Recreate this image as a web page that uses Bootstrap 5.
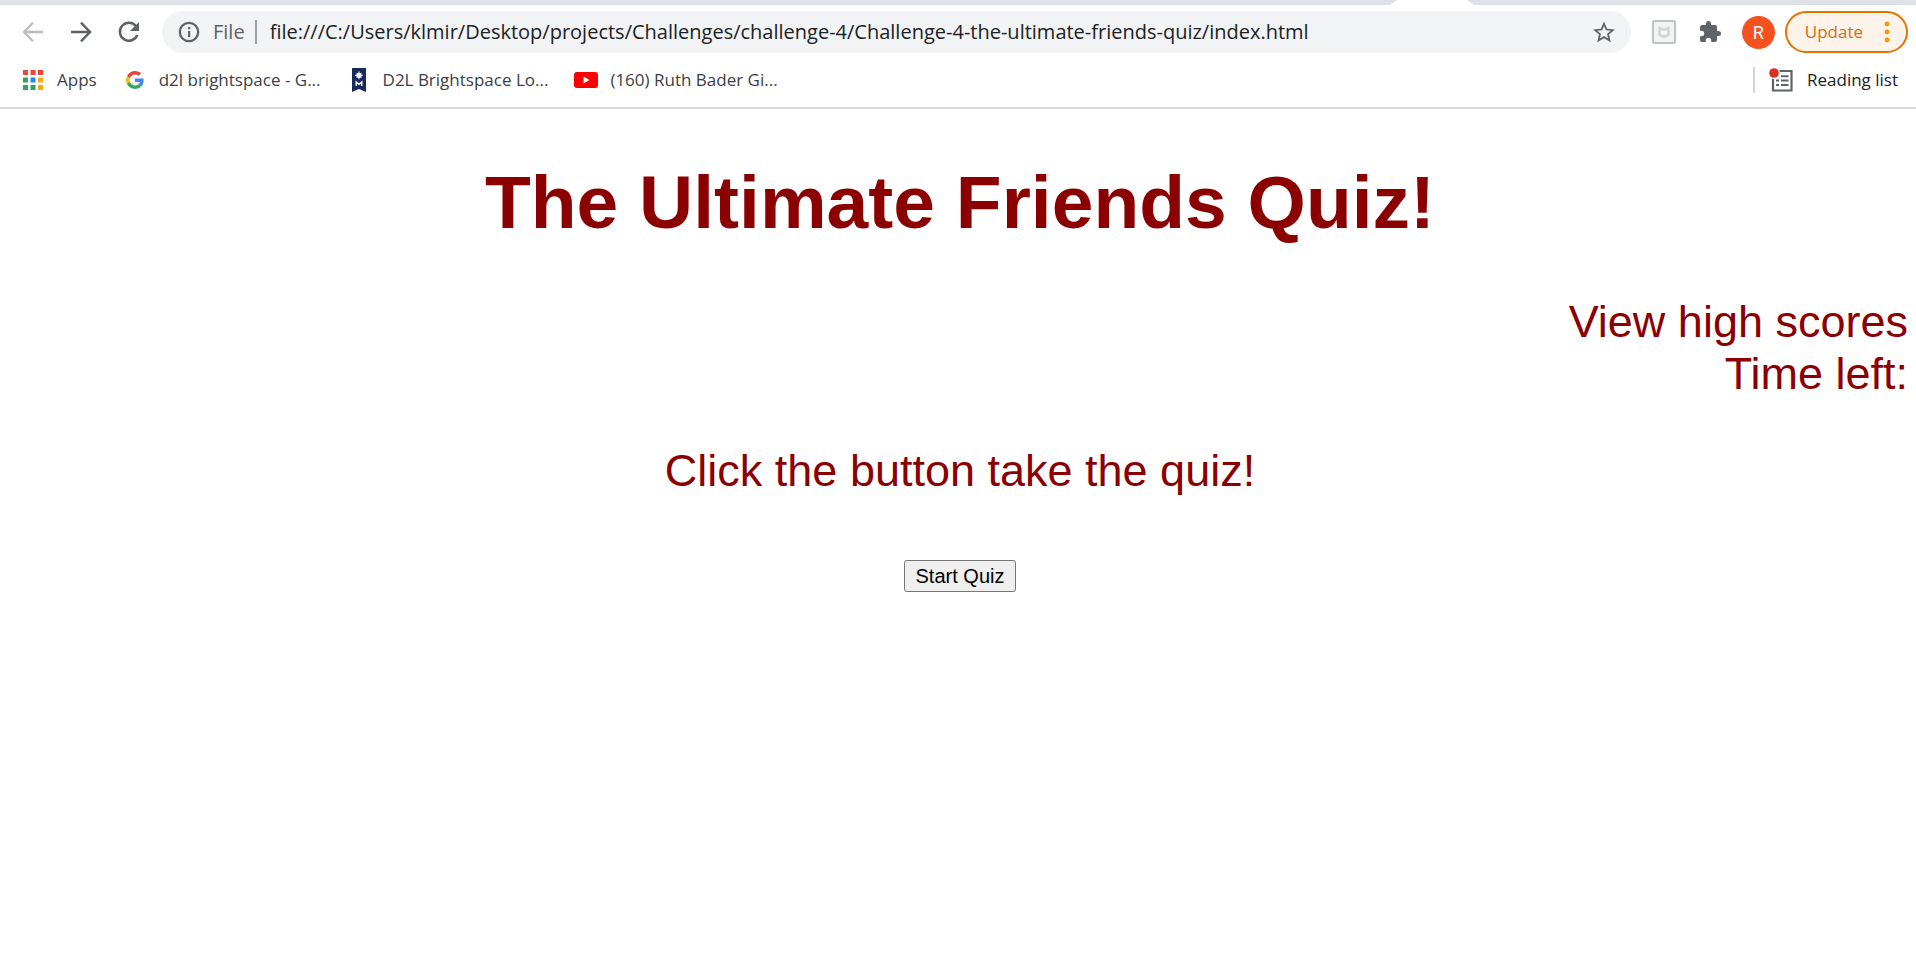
<!DOCTYPE html>
<html lang="en">
<head>
<meta charset="utf-8">
<meta name="viewport" content="width=device-width, initial-scale=1">
<title>The Ultimate Friends Quiz</title>
<link href="https://cdn.jsdelivr.net/npm/bootstrap@5.3.0/dist/css/bootstrap.min.css" rel="stylesheet">
<style>
  body { font-family: "Liberation Sans", Arial, sans-serif; background: #fff; }
  svg { display: block; flex: none; }

  /* browser chrome */
  .chrome { font-family: "Open Sans", "Noto Sans", sans-serif; border-bottom: 2px solid #dadada; color: #3c4043; }
  .tab-strip { height: 5px; background: #dee1e6; }
  .tab-gap { width: 526px; }
  .tab-gap::before { content: ""; display: block; height: 5px; width: 84px; background: #fff; clip-path: polygon(7px 0, 77px 0, 84px 5px, 0 5px); }
  .toolbar { padding: 6px 8px 6px 16px; }
  .icon-button { border: 0; background: none; padding: 0; color: #5f6368; flex: none; }
  .history { gap: 14px; }
  .nav-button { width: 34px; height: 34px; display: grid; place-items: center; }
  .address { height: 42px; border-radius: 21px; background: #f1f3f4; padding: 0 16px; margin: 0 21px 0 16px; }
  .scheme { font-size: 20px; color: #5f6368; margin: 0 10px 0 13px; }
  .rule { width: 2px; height: 24px; background: #9aa0a6; flex: none; margin-right: 13px; }
  .address input { font-size: 20px; border: 0; background: none; padding: 0; outline: 0; color: #202124; min-width: 0; }
  .webadvisor { margin-right: 22px; }
  .extensions { margin-right: 20px; }
  .avatar { width: 33px; height: 33px; border-radius: 50%; background: #f4511e; color: #fff; font: 18px/33px Roboto, sans-serif; margin-right: 10px; }
  .update { height: 42px; border: 2px solid #e37400; border-radius: 21px; background: #fcf3ea; color: #d56e0c; font-size: 17px; padding: 0 16px 0 18px; gap: 21px; }
  .bookmarks { height: 48px; padding: 0 18px 6px 21px; font-size: 17px; }
  .bookmarks a { color: #3c4043; text-decoration: none; white-space: nowrap; display: flex; align-items: center; gap: 12px; }
  .bookmark-list { gap: 26px; }
  .favicon { width: 24px; display: grid; place-items: center; }
  .bookmarks .reading { color: #202124; border-left: 2px solid #d3d5d8; padding-left: 14px; gap: 14px; }

  /* quiz page */
  .quiz { color: #8b0000; font-size: 45px; line-height: 52px; padding: 50px 8px 50px 12px; }
  .quiz h1 { font-size: 75px; line-height: 86px; font-weight: 700; margin: 0 0 51px; }
  .quiz a { color: inherit; text-decoration: none; }
  .prompt { margin: 45px 0 63px; }
  .start { font-size: 20px; line-height: 24px; padding: 2px 11px; color: #000; background: #efefef; border: 1px solid #767676; border-radius: 3px; height: 32px; }
</style>
</head>
<body>
<header class="chrome">
  <div class="tab-strip d-flex justify-content-end"><div class="tab-gap"></div></div>

  <div class="toolbar d-flex align-items-center">
    <nav class="history d-flex" aria-label="History">
      <button class="icon-button nav-button" aria-label="Back" disabled><svg width="22" height="22" viewBox="0 0 22 22" fill="none" stroke="#babcbe" stroke-width="2.3"><path d="M21 11H2.500M11 1.700L2 11l9 9.300"/></svg></button>
      <button class="icon-button nav-button" aria-label="Forward"><svg width="22" height="22" viewBox="0 0 22 22" fill="none" stroke="#5f6368" stroke-width="2.500"><path d="M1 11h18.500M11 1.700L20 11l-9 9.300"/></svg></button>
      <button class="icon-button nav-button" aria-label="Reload"><svg width="22" height="22" viewBox="0 0 22 22"><path d="M18 5.200A9 9 0 1 0 19.300 14" fill="none" stroke="#5f6368" stroke-width="2.500"/><path d="M21 1v9h-9z" fill="#5f6368"/></svg></button>
    </nav>

    <div class="address d-flex align-items-center flex-grow-1">
      <svg width="22" height="22" viewBox="0 0 22 22"><circle cx="11" cy="11" r="9.200" fill="none" stroke="#5f6368" stroke-width="2.300"/><path d="M10 6h2.200v2.200H10zM10 10h2.200v6H10z" fill="#5f6368"/></svg>
      <label class="scheme" for="url">File</label>
      <span class="rule"></span>
      <input id="url" class="flex-grow-1" type="text" value="file:///C:/Users/klmir/Desktop/projects/Challenges/challenge-4/Challenge-4-the-ultimate-friends-quiz/index.html">
      <button class="icon-button" aria-label="Bookmark this page"><svg width="22" height="22" viewBox="0 0 22 22"><path fill="#5f6368" fill-rule="evenodd" d="M22 8.400l-7.900-.7L11 .400 7.900 7.700 0 8.400l6 5.200L4.200 21.300 11 17.200l6.800 4.100L16 13.600zM11 15.100l-4.100 2.500L8 12.900 4.400 9.700l4.800-.4L11 4.900l1.900 4.400 4.800.4-3.700 3.200 1.100 4.700z"/></svg></button>
    </div>

    <div class="d-flex align-items-center">
      <button class="icon-button webadvisor" aria-label="WebAdvisor"><svg width="24" height="24" viewBox="0 0 24 24"><rect x="1" y="1" width="22" height="22" rx="1" fill="#f1f3f4" stroke="#bdc3c8" stroke-width="2"/><path d="M7.500 8L12 10l4.500-2v7L12 17l-4.500-2z" fill="none" stroke="#d2d6d9" stroke-width="2.500"/></svg></button>
      <button class="icon-button extensions" aria-label="Extensions"><svg width="24" height="24" viewBox="0 0 24 24" fill="#5f6368"><path d="M20.500 11H19V7a2 2 0 0 0-2-2h-4V3.500a2.500 2.500 0 0 0-5 0V5H4a2 2 0 0 0-2 2v3.800h1.500a2.700 2.700 0 0 1 0 5.400H2V20a2 2 0 0 0 2 2h3.800v-1.500a2.700 2.700 0 0 1 5.400 0V22H17a2 2 0 0 0 2-2v-4h1.500a2.500 2.500 0 0 0 0-5z"/></svg></button>
      <button class="icon-button avatar" aria-label="Profile">R</button>
      <button class="update d-flex align-items-center">Update <svg width="6" height="22" viewBox="0 0 6 22" fill="#f29900"><circle cx="3" cy="3" r="2.400"/><circle cx="3" cy="11" r="2.400"/><circle cx="3" cy="19" r="2.400"/></svg></button>
    </div>
  </div>

  <nav class="bookmarks d-flex align-items-center" aria-label="Bookmarks">
    <div class="bookmark-list d-flex align-items-center flex-grow-1">
      <a href="#"><span class="favicon"><svg width="20" height="20" viewBox="0 0 20 20"><path d="M0 0h5v5H0zM7.500 0h5v5h-5zM15 0h5v5h-5z" fill="#f44336"/><path d="M0 7.500h5v5H0zM0 15h5v5H0zM7.500 15h5v5h-5z" fill="#34a35c"/><path d="M7.500 7.500h5v5h-5z" fill="#1e88f5"/><path d="M15 7.500h5v5h-5zM15 15h5v5h-5z" fill="#f9ab00"/></svg></span>Apps</a>
      <a href="#"><span class="favicon"><svg width="18" height="18" viewBox="0 0 48 48"><path fill="#ea4335" d="M24 9.500c3.540 0 6.710 1.220 9.210 3.600l6.850-6.850C35.900 2.380 30.470 0 24 0 14.620 0 6.510 5.380 2.560 13.220l7.980 6.190C12.430 13.720 17.740 9.500 24 9.500z"/><path fill="#4285f4" d="M46.980 24.550c0-1.570-.15-3.090-.38-4.550H24v9.020h12.940c-.58 2.960-2.260 5.480-4.780 7.180l7.730 6c4.510-4.180 7.090-10.360 7.090-17.650z"/><path fill="#fbbc05" d="M10.530 28.590c-.48-1.450-.76-2.990-.76-4.590s.27-3.140.76-4.590l-7.980-6.190C.92 16.460 0 20.120 0 24s.92 7.540 2.560 10.780z"/><path fill="#34a853" d="M24 48c6.480 0 11.930-2.130 15.890-5.810l-7.730-6c-2.150 1.450-4.920 2.300-8.160 2.300-6.260 0-11.570-4.220-13.470-9.910l-7.980 6.190C6.510 42.620 14.620 48 24 48z"/></svg></span>d2l brightspace - G...</a>
      <a href="#"><span class="favicon"><svg width="14" height="24" viewBox="0 0 14 24"><path d="M0 0h14v24l-7-3-7 3z" fill="#1b2a5e"/><circle cx="7" cy="7.300" r="2.600" fill="#fff"/><path d="M7 3.300v8M3 7.300h8M4.500 4.800l5 5M9.500 4.800l-5 5" stroke="#fff" stroke-width=".9"/><path d="M4.300 18v-4L7 16.300 9.700 14v4" fill="none" stroke="#fff" stroke-width="1.500"/></svg></span>D2L Brightspace Lo...</a>
      <a href="#"><span class="favicon"><svg width="24" height="18" viewBox="0 0 24 18"><rect y="1" width="24" height="16" rx="3" fill="#f00"/><path d="M9.500 5.500v7l6-3.500z" fill="#fff"/></svg></span>(160) Ruth Bader Gi...</a>
    </div>
    <a href="#" class="reading"><svg width="24" height="24" viewBox="0 0 24 24"><path d="M4 3h18.500v19.500H4z" fill="none" stroke="#5f6368" stroke-width="2.200"/><path d="M7 7.200h3v2H7zM12 7.200h7.500v2H12zM7 11.500h3v2H7zM12 11.500h7.500v2H12zM7 16h3v2H7zM12 16h7.500v2H12z" fill="#5f6368"/><circle cx="5" cy="5" r="6" fill="#fff"/><circle cx="5" cy="5" r="4.800" fill="#d93025"/></svg>Reading list</a>
  </nav>
</header>

<main class="quiz text-center">
  <h1>The Ultimate Friends Quiz!</h1>
  <div class="text-end"><a href="#">View high scores</a></div>
  <div class="text-end">Time left:</div>
  <p class="prompt">Click the button take the quiz!</p>
  <button class="start d-block mx-auto" type="button">Start Quiz</button>
</main>
<script src="https://cdn.jsdelivr.net/npm/bootstrap@5.3.0/dist/js/bootstrap.bundle.min.js"></script>
</body>
</html>
